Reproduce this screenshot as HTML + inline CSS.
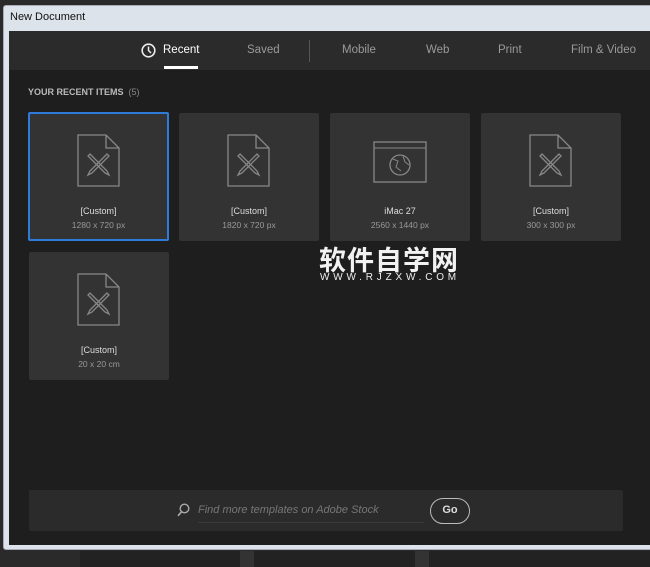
<!DOCTYPE html>
<html><head><meta charset="utf-8"><style>
*{margin:0;padding:0;box-sizing:border-box}
body{width:650px;height:567px;background:#2a2a2a;position:relative;overflow:hidden;font-family:"Liberation Sans",sans-serif}
.frame{position:absolute;left:3px;top:5px;width:660px;height:545px;background:#dde3ea;border:1px solid #aab;border-radius:3px}
.title{position:absolute;left:10px;top:11px;font-size:11px;color:#111}
.tabs{position:absolute;left:9px;top:31px;width:650px;height:39px;background:#2b2b2b}
.body{position:absolute;left:9px;top:70px;width:650px;height:475px;background:#1e1e1e}
.tab{position:absolute;top:44px;font-size:11.5px;color:#9a9a9a}
.card{position:absolute;width:140px;height:128px;background:#333;border-radius:2px}
.card.sel{border:2px solid #2f7bd9}
.card svg{position:absolute;left:48px;top:21px}
.card.sel svg{left:47px;top:20px}
.n{position:absolute;width:100%;text-align:center;top:93px;font-size:9px;color:#ddd}
.s{position:absolute;width:100%;text-align:center;top:107px;font-size:8.5px;color:#999}
.sel .n{top:92px}.sel .s{top:106px}
.bottom{position:absolute;left:80px;top:551px;width:570px;height:16px;background:#222}
</style></head><body>
<div class="frame"></div>
<div class="title">New Document</div>
<div class="tabs"></div>
<div class="body"></div>
<svg style="position:absolute;left:141px;top:43px" width="15" height="15" viewBox="0 0 15 15"><circle cx="7.5" cy="7.5" r="6.3" fill="none" stroke="#eee" stroke-width="1.6"/><path d="M7.5 3.5V7.5L10 10" fill="none" stroke="#eee" stroke-width="1.5"/></svg>
<div class="tab" style="left:163px;color:#fff">Recent</div>
<div style="position:absolute;left:164px;top:66px;width:34px;height:3px;background:#fff"></div>
<div class="tab" style="left:247px">Saved</div>
<div style="position:absolute;left:309px;top:40px;width:1px;height:22px;background:#555"></div>
<div class="tab" style="left:342px">Mobile</div>
<div class="tab" style="left:426px">Web</div>
<div class="tab" style="left:498px">Print</div>
<div class="tab" style="left:571px">Film &amp; Video</div>
<div style="position:absolute;left:28px;top:87px;font-size:9px;font-weight:bold;color:#bbb">YOUR RECENT ITEMS <span style="font-weight:normal;color:#888">&nbsp;(5)</span></div>

<div class="card sel" style="left:28px;top:112px;width:141px;height:129px"><svg width="44" height="53" viewBox="0 0 44 53"><path d="M1 1H29L42 14V52H1Z M29 1V14H42" fill="none" stroke="#888" stroke-width="1.3"/><path d="M13 20L30 37L32 41L28 39L11 22Z M30 20L13 37L11 41L15 39L32 22Z" fill="none" stroke="#888" stroke-width="1.3"/></svg><div class="n">[Custom]</div><div class="s">1280 x 720 px</div></div>
<div class="card" style="left:179px;top:113px"><svg width="44" height="53" viewBox="0 0 44 53"><path d="M1 1H29L42 14V52H1Z M29 1V14H42" fill="none" stroke="#888" stroke-width="1.3"/><path d="M13 20L30 37L32 41L28 39L11 22Z M30 20L13 37L11 41L15 39L32 22Z" fill="none" stroke="#888" stroke-width="1.3"/></svg><div class="n">[Custom]</div><div class="s">1820 x 720 px</div></div>
<div class="card" style="left:330px;top:113px"><svg style="left:43px;top:28px" width="54" height="42" viewBox="0 0 54 42"><rect x="1" y="1" width="52" height="40" fill="none" stroke="#888" stroke-width="1.3"/><line x1="1" y1="7" x2="53" y2="7" stroke="#888"/><circle cx="27" cy="24" r="10" fill="none" stroke="#888" stroke-width="1.3"/><path d="M20 18L25 20L23 26L28 30M30 15L32 21L36 24" fill="none" stroke="#888"/></svg><div class="n">iMac 27</div><div class="s">2560 x 1440 px</div></div>
<div class="card" style="left:481px;top:113px"><svg width="44" height="53" viewBox="0 0 44 53"><path d="M1 1H29L42 14V52H1Z M29 1V14H42" fill="none" stroke="#888" stroke-width="1.3"/><path d="M13 20L30 37L32 41L28 39L11 22Z M30 20L13 37L11 41L15 39L32 22Z" fill="none" stroke="#888" stroke-width="1.3"/></svg><div class="n">[Custom]</div><div class="s">300 x 300 px</div></div>
<div class="card" style="left:29px;top:252px"><svg width="44" height="53" viewBox="0 0 44 53"><path d="M1 1H29L42 14V52H1Z M29 1V14H42" fill="none" stroke="#888" stroke-width="1.3"/><path d="M13 20L30 37L32 41L28 39L11 22Z M30 20L13 37L11 41L15 39L32 22Z" fill="none" stroke="#888" stroke-width="1.3"/></svg><div class="n">[Custom]</div><div class="s">20 x 20 cm</div></div>

<div style="position:absolute;left:319px;top:244px;font-family:'Noto Sans CJK SC',sans-serif;font-size:27px;font-weight:bold;color:#f2f2f2;letter-spacing:1px;line-height:30px">软件自学网</div>
<div style="position:absolute;left:320px;top:272px;font-size:10px;color:#eee;letter-spacing:3.8px">WWW.RJZXW.COM</div>

<div style="position:absolute;left:29px;top:490px;width:594px;height:41px;background:#2b2b2b;border-radius:2px"></div>
<svg style="position:absolute;left:177px;top:503px" width="13" height="14" viewBox="0 0 13 14"><circle cx="7.5" cy="5.5" r="4.3" fill="none" stroke="#aaa" stroke-width="1.4"/><line x1="4.5" y1="8.8" x2="1" y2="12.8" stroke="#aaa" stroke-width="1.6"/></svg>
<div style="position:absolute;left:198px;top:504px;font-size:11px;font-style:italic;color:#777">Find more templates on Adobe Stock</div>
<div style="position:absolute;left:198px;top:522px;width:226px;height:1px;background:#3a3a3a"></div>
<div style="position:absolute;left:430px;top:498px;width:40px;height:26px;border:1.5px solid #bbb;border-radius:13px;color:#ddd;font-size:11px;font-weight:bold;text-align:center;line-height:23px">Go</div>
<div class="bottom"></div>
<div style="position:absolute;left:240px;top:551px;width:14px;height:16px;background:#333"></div>
<div style="position:absolute;left:415px;top:551px;width:14px;height:16px;background:#333"></div>
</body></html>
